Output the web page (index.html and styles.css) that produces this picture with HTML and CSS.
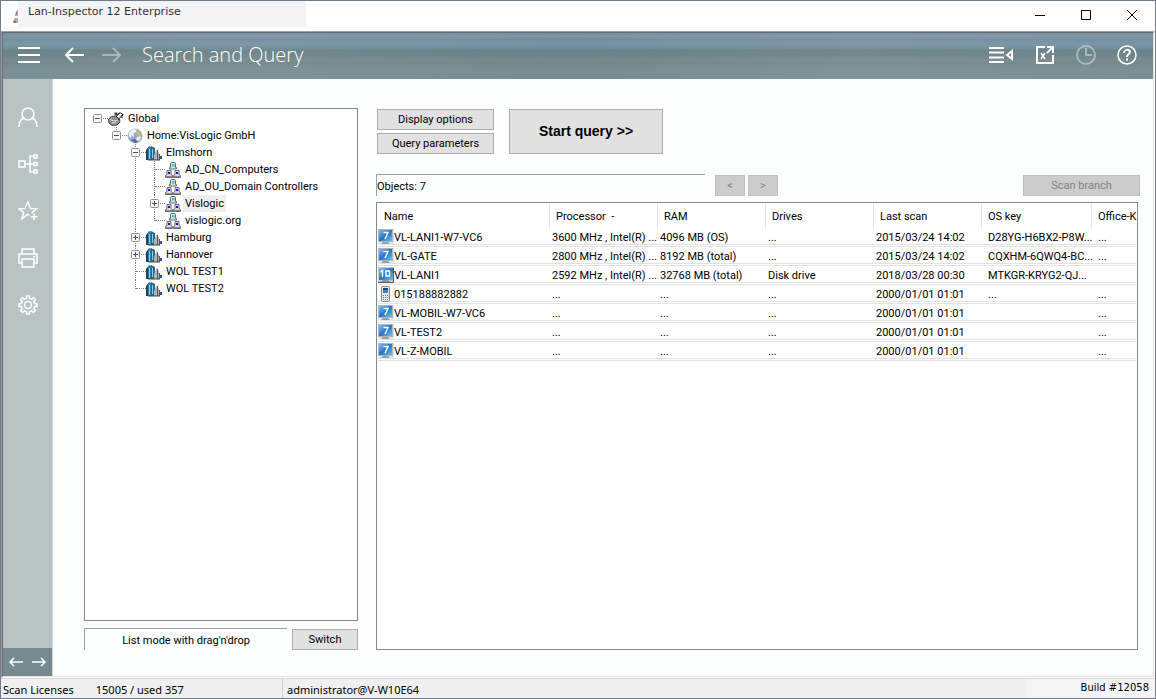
FILE: index.html
```html
<!DOCTYPE html>
<html lang="en">
<head>
    <meta charset="UTF-8">
    <meta name="viewport" content="width=device-width, initial-scale=1.0">
    <title>Lan-Inspector 12 Enterprise</title>
    <link rel="stylesheet" href="styles.css">
</head>
<body>
    <!-- Shared icons -->
    <svg class="sprite" aria-hidden="true">
        <symbol id="i-minus" viewBox="0 0 9 9">
            <rect x=".5" y=".5" width="8" height="8" rx="1" fill="#f8f8f8" stroke="#8f8f8f"/>
            <path d="M2 4.5h5" stroke="#3b4f9b"/>
        </symbol>
        <symbol id="i-plus" viewBox="0 0 9 9">
            <rect x=".5" y=".5" width="8" height="8" rx="1" fill="#f8f8f8" stroke="#8f8f8f"/>
            <path d="M2 4.5h5M4.5 2v5" stroke="#3b4f9b"/>
        </symbol>
        <symbol id="i-dish" viewBox="0 0 16 16">
            <path d="M.5 8l3-2.500 4-.5 4 3 .5 3-3 3-5 .5-3-2.500z" fill="#8f8f8f" stroke="#4c4c4c"/>
            <path d="M2 8.500l4 1.500 4-1M4 12l4-1" stroke="#ddd" fill="none"/>
            <path d="M6.500 1.500h3v3h-3z" fill="#444"/>
            <path d="M8 6l3-4M10 9l5-6M11.500 1.500l3.500 2-2 3.500" stroke="#222" fill="none"/>
            <path d="M10 4l2-2M13 6l2 1" stroke="#b52a2a"/>
        </symbol>
        <symbol id="i-globe" viewBox="0 0 16 16">
            <circle cx="8" cy="8" r="7" fill="#93a7d6" stroke="#b4b7c2"/>
            <path d="M2 5l4-4 4 1-2 3-3 1-1 4-2-2z" fill="#f3f5fb"/>
            <path d="M10 9l3-1 1 2-3 3-2-1z" fill="#f4eecb"/>
            <path d="M9 3l4 2 1 3-4-1-1-2z" fill="#d6c05c"/>
            <path d="M5 5l2 1v3l-2-1z" fill="#dcdfe8"/>
            <path d="M4 12l4-1 3 3-3 1z" fill="#4e63a9"/>
        </symbol>
        <symbol id="i-city" viewBox="0 0 16 16">
            <path d="M1 4l2-3 3 1v13H1z" fill="#2f79a8"/>
            <path d="M0 5l2-2v12H0z" fill="#17455f"/>
            <path d="M5 1l4 2v12H5z" fill="#286890"/>
            <path d="M3.500 4v10M6.500 4v9" stroke="#8fd0ee"/>
            <path d="M8 10l3-6 2 4v7H8z" fill="#b4b4b8"/>
            <path d="M11.500 5v10M13.500 9v6" stroke="#55565c"/>
            <path d="M14 11h2v3h-2z" fill="#38507a"/>
            <path d="M2 15h12" stroke="#3e4a3e"/>
        </symbol>
        <symbol id="i-group" viewBox="0 0 16 16">
            <path d="M5.500 1.500q0-1 1-1h3q1 0 1 1v4h1v1.500h-7V5.500h1zM2 8.500h4v4l1.500 1v2h-7v-2l1.500-1zM10 8.500h4v4l1.500 1v2h-7v-2l1.500-1z" fill="#dadada" stroke="#6a6a6a"/>
            <path d="M7 2h2.500v2.500H7z" fill="#18d8e4"/>
            <path d="M3 10h2v2H3zM11 10h2v2h-2z" fill="#1414e0"/>
            <path d="M1 14.500h6M9 14.500h6" stroke="#8a8a8a"/>
        </symbol>
        <linearGradient id="screen" x1="0" y1="0" x2="1" y2="1">
            <stop offset="0" stop-color="#8cc0ee"/>
            <stop offset=".5" stop-color="#2474c8"/>
            <stop offset="1" stop-color="#67c7ee"/>
        </linearGradient>
        <symbol id="i-win7" viewBox="0 0 16 16">
            <path d="M0 0h16v16H0z" fill="#e4e4e4"/>
            <path d="M0 0h15v13H0z" fill="#a9b6c2"/>
            <path d="M1 1h13v11H1z" fill="url(#screen)"/>
            <path d="M5.500 3.500H10L7 10" fill="none" stroke="#fff" stroke-width="1.500"/>
            <path d="M5 13h5l2 2H3z" fill="#999fa5"/>
        </symbol>
        <symbol id="i-win10" viewBox="0 0 16 16">
            <path d="M0 0h16v16H0z" fill="#c3ccd4"/>
            <path d="M1 1h14v12H1z" fill="url(#screen)"/>
            <path d="M2.500 5l2-1.500V10M8 4h3.500v5H8z" fill="none" stroke="#fff" stroke-width="1.500"/>
            <path d="M5 13h5l2 2H3z" fill="#8d939a"/>
            <path d="M0 15.500h15.500V1" fill="none" stroke="#555"/>
        </symbol>
        <symbol id="i-phone" viewBox="0 0 16 16">
            <rect x="3.500" y=".5" width="8" height="15" rx="1" fill="#e3e6e8" stroke="#7d868d"/>
            <path d="M5 2h5v5H5z" fill="#3484c4"/>
            <path d="M5 2h5v2H5z" fill="#174a7a"/>
            <path d="M5 9.500h5M5 11.500h5M5 13.500h5" stroke="#777" stroke-dasharray="1 1"/>
        </symbol>
    </svg>

    <header class="titlebar">
        <svg class="app-icon" viewBox="0 0 5 13"><path d="M2 4l2-4h1v6H2zM0 11l2-3h3v5H0z" fill="#b3a9a6"/><path d="M3 2h1v2H3zM1 11h2v2H1z" fill="#7c7270"/></svg>
        <div class="app-name">Lan-Inspector 12 Enterprise</div>
        <div class="window-buttons">
            <button aria-label="Minimize"><svg viewBox="0 0 12 12"><path d="M1 6.500h10"/></svg></button>
            <button aria-label="Maximize"><svg viewBox="0 0 12 12"><path d="M1.500 1.500h9v9h-9z"/></svg></button>
            <button aria-label="Close"><svg viewBox="0 0 12 12"><path d="M1 1l10 10M11 1L1 11"/></svg></button>
        </div>
    </header>

    <div class="frame">
        <div class="app">
            <div class="banner">
                <button class="icon-button" aria-label="Menu"><svg viewBox="0 0 24 20"><path d="M1 3h22M1 10h22M1 17h22" stroke-width="2"/></svg></button>
                <div class="history">
                    <button class="icon-button" aria-label="Back"><svg viewBox="0 0 24 20"><path d="M21 10H3M10 3l-7 7 7 7" stroke-width="2"/></svg></button>
                    <button class="icon-button faded" aria-label="Forward" disabled><svg viewBox="0 0 24 20"><path d="M3 10h18M14 3l7 7-7 7" stroke-width="2"/></svg></button>
                </div>
                <h1>Search and Query</h1>
                <div class="banner-tools">
                    <button class="icon-button" aria-label="Toggle list"><svg viewBox="0 0 26 20"><path d="M1 3h15M1 7.500h15M1 12.500h15M1 17h15" stroke-width="2"/><path d="M24 6v8l-5-4z" stroke-width="2"/></svg></button>
                    <button class="icon-button" aria-label="Export"><svg viewBox="0 0 20 20"><path d="M10 2H2v16h16v-8M12 2h6v6M18 2l-6 6" stroke-width="2"/><path d="M6 8l4 6M10 8l-4 6"/></svg></button>
                    <button class="icon-button faded" aria-label="Schedule" disabled><svg viewBox="0 0 20 20"><circle cx="10" cy="10" r="9" stroke-width="2"/><path d="M10 3v7h6" stroke-width="2"/></svg></button>
                    <button class="icon-button" aria-label="Help"><svg viewBox="0 0 20 20"><circle cx="10" cy="10" r="9"/><path d="M7 8c0-4 6-4 6-1 0 2-3 2-3 5M10 13.500v2" stroke-width="2"/></svg></button>
                </div>
            </div>

            <div class="body">
                <nav class="sidebar">
                    <div class="sidebar-items">
                        <button class="icon-button" aria-label="User"><svg viewBox="0 0 20 20"><circle cx="10" cy="7" r="6"/><path d="M1 20c0-5 2-8 5.500-9M19 20c0-5-2-8-5.500-9"/></svg></button>
                        <button class="icon-button" aria-label="Network"><svg viewBox="0 0 20 20"><path d="M1 7h6v6H1zM7 10h9M16 2h-4v16h4M16 1h3v3h-3zM16 8.500h3v3h-3zM16 16h3v3h-3z"/></svg></button>
                        <button class="icon-button" aria-label="Favorites"><svg viewBox="0 0 21 21"><path d="M12 15l-2-1-6 5 2-7-5-4h6l3.500-7L13 8h7l-5 4v1M17 13v7M13.500 16.500h7"/></svg></button>
                        <button class="icon-button" aria-label="Print"><svg viewBox="0 0 20 20"><path d="M4 6V1h12v5M4 15H1V6h18v9h-3M4 11h12v8H4zM15 8.500h2"/></svg></button>
                        <button class="icon-button" aria-label="Settings"><svg viewBox="0 0 20 20"><path d="M8.500 1h3v2.500l2 .9 1.800-1.700 2.100 2.100-1.700 1.800.9 2H19v3h-2.400l-.9 2 1.700 1.800-2.100 2.100-1.800-1.700-2 .9V19h-3v-2.300l-2-.9-1.800 1.700-2.100-2.100 1.700-1.800-.9-2H1v-3h2.400l.9-2-1.700-1.800 2.100-2.100 1.800 1.700 2-.9z"/><circle cx="10" cy="10" r="3.500"/></svg></button>
                    </div>
                    <div class="sidebar-pager">
                        <button class="icon-button" aria-label="Previous"><svg viewBox="0 0 16 12"><path d="M15 6H2M6 2L2 6l4 4"/></svg></button>
                        <button class="icon-button" aria-label="Next"><svg viewBox="0 0 16 12"><path d="M1 6h13M10 2l4 4-4 4"/></svg></button>
                    </div>
                </nav>

                <main class="content">
                    <section class="tree-column">
                        <div class="tree">
                            <ul>
                                <li>
                                    <div class="node"><button class="expander" aria-label="Collapse"><svg><use href="#i-minus"/></svg></button><svg class="node-icon"><use href="#i-dish"/></svg><span>Global</span></div>
                                    <ul>
                                        <li>
                                            <div class="node"><button class="expander" aria-label="Collapse"><svg><use href="#i-minus"/></svg></button><svg class="node-icon"><use href="#i-globe"/></svg><span>Home:VisLogic GmbH</span></div>
                                            <ul>
                                                <li>
                                                    <div class="node"><button class="expander" aria-label="Collapse"><svg><use href="#i-minus"/></svg></button><svg class="node-icon"><use href="#i-city"/></svg><span>Elmshorn</span></div>
                                                    <ul>
                                                        <li><div class="node leaf"><svg class="node-icon"><use href="#i-group"/></svg><span>AD_CN_Computers</span></div></li>
                                                        <li><div class="node leaf"><svg class="node-icon"><use href="#i-group"/></svg><span>AD_OU_Domain Controllers</span></div></li>
                                                        <li><div class="node selected"><button class="expander" aria-label="Expand"><svg><use href="#i-plus"/></svg></button><svg class="node-icon"><use href="#i-group"/></svg><span>Vislogic</span></div></li>
                                                        <li><div class="node leaf"><svg class="node-icon"><use href="#i-group"/></svg><span>vislogic.org</span></div></li>
                                                    </ul>
                                                </li>
                                                <li><div class="node"><button class="expander" aria-label="Expand"><svg><use href="#i-plus"/></svg></button><svg class="node-icon"><use href="#i-city"/></svg><span>Hamburg</span></div></li>
                                                <li><div class="node"><button class="expander" aria-label="Expand"><svg><use href="#i-plus"/></svg></button><svg class="node-icon"><use href="#i-city"/></svg><span>Hannover</span></div></li>
                                                <li><div class="node leaf"><svg class="node-icon"><use href="#i-city"/></svg><span>WOL TEST1</span></div></li>
                                                <li><div class="node leaf"><svg class="node-icon"><use href="#i-city"/></svg><span>WOL TEST2</span></div></li>
                                            </ul>
                                        </li>
                                    </ul>
                                </li>
                            </ul>
                        </div>
                        <div class="mode-row">
                            <div class="sunken mode">List mode with drag'n'drop</div>
                            <button class="button">Switch</button>
                        </div>
                    </section>

                    <section class="query-column">
                        <div class="query-buttons">
                            <div class="option-buttons">
                                <button class="button">Display options</button>
                                <button class="button">Query parameters</button>
                            </div>
                            <button class="button start">Start query &gt;&gt;</button>
                        </div>
                        <div class="result-bar">
                            <div class="sunken count">Objects: 7</div>
                            <div class="pager">
                                <button class="button" disabled>&lt;</button>
                                <button class="button" disabled>&gt;</button>
                            </div>
                            <button class="button scan" disabled>Scan branch</button>
                        </div>
                        <div class="results">
                            <table>
                                <colgroup>
                                    <col class="col-name">
                                    <col class="col-data" span="4">
                                    <col class="col-key">
                                    <col>
                                </colgroup>
                                <thead>
                                    <tr><th>Name</th><th>Processor &nbsp;-</th><th>RAM</th><th>Drives</th><th>Last scan</th><th>OS key</th><th>Office-K</th></tr>
                                </thead>
                                <tbody>
                                    <tr><td><svg><use href="#i-win7"/></svg>VL-LANI1-W7-VC6</td><td>3600 MHz , Intel(R) ...</td><td>4096 MB (OS)</td><td>...</td><td>2015/03/24 14:02</td><td>D28YG-H6BX2-P8W...</td><td>...</td></tr>
                                    <tr><td><svg><use href="#i-win7"/></svg>VL-GATE</td><td>2800 MHz , Intel(R) ...</td><td>8192 MB (total)</td><td>...</td><td>2015/03/24 14:02</td><td>CQXHM-6QWQ4-BC...</td><td>...</td></tr>
                                    <tr><td><svg><use href="#i-win10"/></svg>VL-LANI1</td><td>2592 MHz , Intel(R) ...</td><td>32768 MB (total)</td><td>Disk drive</td><td>2018/03/28 00:30</td><td>MTKGR-KRYG2-QJ...</td><td></td></tr>
                                    <tr><td><svg><use href="#i-phone"/></svg>015188882882</td><td>...</td><td>...</td><td>...</td><td>2000/01/01 01:01</td><td>...</td><td>...</td></tr>
                                    <tr><td><svg><use href="#i-win7"/></svg>VL-MOBIL-W7-VC6</td><td>...</td><td>...</td><td>...</td><td>2000/01/01 01:01</td><td></td><td>...</td></tr>
                                    <tr><td><svg><use href="#i-win7"/></svg>VL-TEST2</td><td>...</td><td>...</td><td>...</td><td>2000/01/01 01:01</td><td></td><td>...</td></tr>
                                    <tr><td><svg><use href="#i-win7"/></svg>VL-Z-MOBIL</td><td>...</td><td>...</td><td>...</td><td>2000/01/01 01:01</td><td></td><td>...</td></tr>
                                </tbody>
                            </table>
                        </div>
                    </section>
                </main>
            </div>
        </div>
    </div>

    <footer class="statusbar">
        <div class="licenses"><span>Scan Licenses</span><span>15005 / used 357</span></div>
        <div class="account">administrator@V-W10E64</div>
        <div class="build">Build #12058</div>
    </footer>
</body>
</html>
```
FILE: styles.css
```css
* {
    margin: 0;
    padding: 0;
    box-sizing: border-box;
}

body {
    font-family: Roboto, "Liberation Sans", Arial, sans-serif;
    font-size: 11px;
    line-height: 17px;
    color: #000;
    background: white;
    height: 100vh;
    border: 1px solid #6f7b91;
    display: flex;
    flex-direction: column;
    overflow: hidden;
}

button {
    font: inherit;
    color: inherit;
    border: none;
    background: none;
}

svg {
    display: block;
    flex: none;
}

ul {
    list-style: none;
}

.sprite {
    position: absolute;
    width: 0;
    height: 0;
}

/* Title bar */
.titlebar {
    display: flex;
    height: 30px;
    flex: none;
}

.app-icon {
    width: 5px;
    height: 13px;
    margin: 9px 0 0 12px;
}

.app-name {
    width: 288px;
    height: 26px;
    padding: 2px 10px;
    background: #f4f4f4;
    color: #333;
    font-family: "DejaVu Sans", sans-serif;
}

.window-buttons {
    display: flex;
    height: 28px;
    margin-left: auto;
}

.window-buttons button {
    width: 46px;
    display: flex;
    align-items: center;
    justify-content: center;
}

.window-buttons svg {
    width: 12px;
    height: 12px;
    fill: none;
    stroke: #000;
}

/* Sunken frame round the work area */
.frame {
    flex: 1;
    min-height: 0;
    display: flex;
    border: 1px solid #a0a0a0;
    border-right-color: white;
    border-bottom-color: white;
}

.app {
    flex: 1;
    min-width: 0;
    display: flex;
    flex-direction: column;
    border: 1px solid #696969;
    border-right-color: #e0e0e0;
    border-bottom-color: #e0e0e0;
}

/* Banner */
.banner {
    height: 46px;
    flex: none;
    display: flex;
    align-items: center;
    padding: 0 16px 2px 14px;
    color: white;
    background:
        linear-gradient(90deg, rgba(255,255,255,0) 0%, rgba(255,255,255,0.03) 20%, rgba(40,60,70,0.03) 50%, rgba(255,255,255,0.04) 75%, rgba(255,255,255,0) 100%),
        linear-gradient(180deg, #7592a3 0%, #7e97a5 8%, #748f9f 14%, #7b96a6 24%, #718c9a 34%, #6c8186 38%, #71868a 50%, #778c91 58%, #73898c 66%, #7b9195 80%, #788e92 96%, #7196ad 100%);
}

.icon-button {
    display: flex;
}

.icon-button svg {
    width: 20px;
    height: 20px;
    fill: none;
    stroke: white;
    stroke-width: 1.5;
}

.banner .icon-button svg {
    width: auto;
    height: 20px;
}

.faded {
    opacity: 0.4;
}

.history {
    display: flex;
    gap: 12px;
    margin-left: 22px;
}

.banner h1 {
    font-family: "Open Sans", "Noto Sans", sans-serif;
    font-weight: 300;
    font-size: 20px;
    line-height: 28px;
    margin-left: 19px;
}

.banner-tools {
    display: flex;
    gap: 21px;
    margin-left: auto;
}

.body {
    flex: 1;
    min-height: 0;
    display: flex;
    background: #fcfefd;
}

/* Sidebar */
.sidebar {
    width: 50px;
    flex: none;
    display: flex;
    flex-direction: column;
    justify-content: space-between;
    background: #b8c4c4;
    border-right: 1px solid #ccd6d5;
}

.sidebar-items {
    display: flex;
    flex-direction: column;
    align-items: center;
    gap: 27px;
    padding-top: 28px;
}

.sidebar-pager {
    display: flex;
    justify-content: center;
    gap: 7px;
    padding: 8px 0;
    background: #768a8f;
}

.sidebar-pager svg {
    width: 16px;
    height: 12px;
}

/* Content */
.content {
    flex: 1;
    min-width: 0;
    display: flex;
    gap: 18px;
    padding: 29px 13px 26px 31px;
}

.tree-column {
    width: 274px;
    flex: none;
    display: flex;
    flex-direction: column;
    gap: 7px;
}

.tree {
    flex: 1;
    border: 1px solid #828790;
    background: white;
    padding: 1px 3px;
}

.tree ul ul {
    margin-left: 19px;
}

.tree li {
    position: relative;
}

.tree ul ul > li::before {
    content: "";
    position: absolute;
    left: 9px;
    top: 0;
    height: 100%;
    border-left: 1px dotted #808080;
}

.tree ul ul > li:last-child::before {
    height: 9px;
}

.node {
    position: relative;
    display: flex;
    align-items: center;
    height: 17px;
    padding-left: 5px;
}

.node::before {
    content: "";
    position: absolute;
    left: 10px;
    top: 8px;
    width: 10px;
    border-top: 1px dotted #808080;
}

.leaf {
    padding-left: 20px;
}

.expander {
    position: relative;
    width: 9px;
    height: 9px;
    margin-right: 6px;
}

.expander svg {
    width: 9px;
    height: 9px;
}

.node-icon {
    width: 16px;
    height: 16px;
}

.node span {
    margin-left: 2px;
    padding: 1px 2px 0;
    line-height: 16px;
}

.selected span {
    background: #efefef;
}

.mode-row {
    display: flex;
    align-items: center;
    gap: 5px;
}

.sunken {
    height: 22px;
    padding-top: 3px;
    border-top: 1px solid #a0a0a0;
    border-left: 1px solid #a0a0a0;
}

.mode {
    flex: 1;
    text-align: center;
}

.button {
    height: 21px;
    border: 1px solid #adadad;
    background: #e1e1e1;
}

.button:disabled {
    border-color: #bfbfbf;
    background: #ccc;
    color: #838383;
}

.mode-row .button {
    width: 66px;
}

/* Query area */
.query-column {
    flex: 1;
    min-width: 0;
    display: flex;
    flex-direction: column;
}

.query-buttons {
    display: flex;
    gap: 15px;
    padding: 1px;
}

.option-buttons {
    display: flex;
    flex-direction: column;
    gap: 3px;
    width: 117px;
}

.start {
    width: 154px;
    height: 45px;
    font-family: "Liberation Sans", Arial, sans-serif;
    font-size: 14px;
    font-weight: bold;
}

.result-bar {
    display: flex;
    align-items: flex-end;
    margin-top: 19px;
}

.count {
    width: 329px;
}

.pager {
    display: flex;
    gap: 3px;
    margin-left: 10px;
}

.pager .button {
    width: 30px;
}

.scan {
    width: 117px;
    margin-left: auto;
}

.results {
    flex: 1;
    min-height: 0;
    margin: 6px 2px 0 0;
    border: 1px solid #828790;
    background: white;
    overflow: hidden;
    padding: 1px 1px 0;
}

table {
    width: 100%;
    table-layout: fixed;
    border-collapse: separate;
    border-spacing: 0;
    white-space: nowrap;
}

.col-name {
    width: 172px;
}

.col-data {
    width: 108px;
}

.col-key {
    width: 110px;
}

th {
    height: 24px;
    padding-left: 6px;
    font-weight: normal;
    text-align: left;
    border-right: 1px solid #e2e2e2;
}

th:last-child {
    border-right: none;
}

td {
    height: 19px;
    padding: 1px 0 0 2px;
    vertical-align: top;
    border-bottom: 1px solid #e2e2e2;
    box-shadow: inset 0 -1px white, inset 0 -2px #e2e2e2;
}

td:first-child {
    padding-left: 0;
}

td:nth-child(n+6) {
    padding-left: 6px;
}

td svg {
    float: left;
    width: 16px;
    height: 16px;
}

/* Status bar */
.statusbar {
    height: 20px;
    flex: none;
    display: flex;
    background: #f0f0f0;
    border-top: 1px solid #d7d7d7;
    font-family: "Noto Sans", "Open Sans", sans-serif;
    line-height: 21px;
}

.licenses {
    width: 282px;
    display: flex;
    gap: 22px;
    padding-left: 2px;
    border-right: 1px solid #d0d0d0;
}

.account {
    padding-left: 4px;
}

.build {
    width: 128px;
    margin-left: auto;
    padding-right: 6px;
    background: #f5f5f5;
    font-family: "DejaVu Sans", sans-serif;
    font-size: 10px;
    line-height: 17px;
    text-align: right;
}
```
